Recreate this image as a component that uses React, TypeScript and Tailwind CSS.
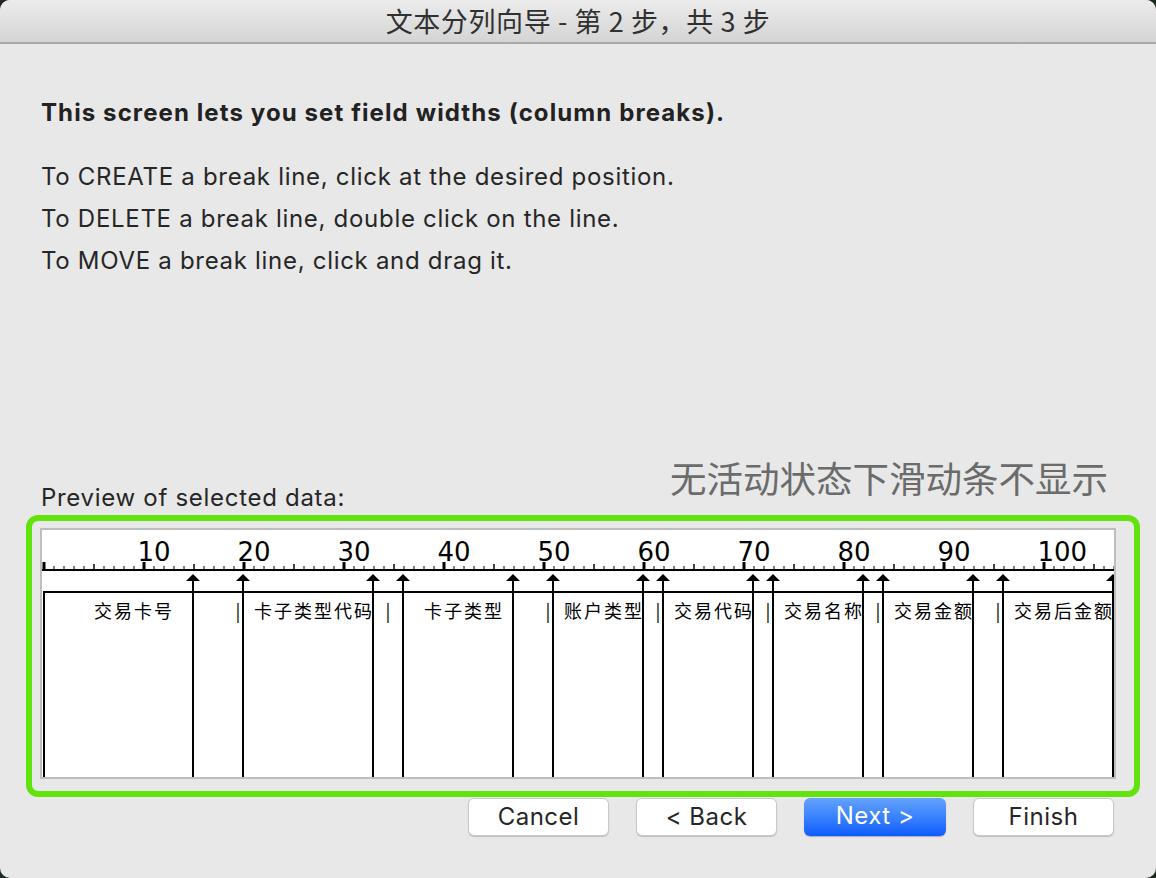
const UNITS = 108;
const BREAKS = [15, 20, 33, 36, 47, 51, 60, 62, 71, 73, 82, 84, 93, 96, 107];
const ROW =
  "     交易卡号      | 卡子类型代码 |   卡子类型    | 账户类型 | 交易代码 | 交易名称 | 交易金额  | 交易后金额";

const ui = { fontFamily: "Inter, 'Noto Sans CJK SC', sans-serif" };
const cjk = { fontFamily: "'Noto Sans CJK SC', 'Noto Sans', sans-serif" };

function Ruler() {
  const ticks = Array.from({ length: UNITS }, (_, n) => n);
  return (
    <svg width="1072" height="61" className="block shrink-0">
      <rect x="0" y="39" width="1072" height="2" fill="#000" />
      {ticks.map((n) => {
        const x = 2 + n * 10;
        if (n % 10 === 0) return <rect key={n} x={x - 1.5} y="32" width="3" height="9" fill="#000" />;
        if (n % 5 === 0) return <rect key={n} x={x - 0.75} y="34" width="1.5" height="5" fill="#000" />;
        return <rect key={n} x={x - 0.5} y="36" width="1" height="3" fill="#000" />;
      })}
      {ticks
        .filter((n) => n > 0 && n % 10 === 0)
        .map((n) => (
          <text
            key={n}
            x={2 + n * 10 - 6.5}
            y="31"
            fontSize="26"
            fill="#000"
            style={{ fontFamily: "'DejaVu Sans', sans-serif" }}
          >
            {n}
          </text>
        ))}
    </svg>
  );
}

function Preview() {
  return (
    <div className="relative h-[251px] w-[1076px] overflow-hidden border-2 border-[#bdbdbd] bg-white">
      <div className="flex h-full flex-col">
        <Ruler />
        <div className="ml-[1px] flex-1 border-l-2 border-t-2 border-black pt-[6px]">
          <div className="-ml-[2px] flex h-[22px] whitespace-nowrap text-[18px] leading-[22px] text-black" style={cjk}>
            {Array.from(ROW).map((ch, i) => {
              const wide = /[\u4e00-\u9fff]/.test(ch);
              return (
                <span key={i} className={wide ? "w-[20px] shrink-0 text-center" : "w-[10px] shrink-0 text-center"}>
                  {ch === " " ? "\u00a0" : ch}
                </span>
              );
            })}
          </div>
        </div>
      </div>
      {BREAKS.map((b) => (
        <div
          key={b}
          className="absolute bottom-0 top-[44px] flex w-[14px] flex-col items-center"
          style={{ left: b * 10 - 6 }}
        >
          <svg width="14" height="7" className="block shrink-0">
            <polygon points="0,7 7,0 14,7" fill="#000" />
          </svg>
          <div className="w-[2px] flex-1 bg-black" />
        </div>
      ))}
    </div>
  );
}

function Button({ label, primary }: { label: string; primary?: boolean }) {
  return (
    <button
      className={
        primary
          ? "h-[38px] w-[142px] rounded-[6px] bg-linear-to-b from-[#64a2fb] to-[#0b5bff] pb-[2px] text-[24px] tracking-[0.5px] text-white shadow-[0_1px_1px_rgba(0,0,0,0.25)]"
          : "h-[38px] w-[141px] rounded-[6px] border border-[#c9c9c9] bg-white pb-[2px] text-[24px] tracking-[0.5px] text-[#262626] shadow-[0_1px_1px_rgba(0,0,0,0.18)]"
      }
      style={ui}
    >
      {label}
    </button>
  );
}

export default function App() {
  return (
    <div className="h-[878px] w-[1156px] bg-[#1f2a22]">
      <div className="flex h-full flex-col overflow-hidden rounded-[10px] bg-[#e8e8e8]" style={ui}>
        <div className="flex h-[44px] shrink-0 items-center justify-center border-b-2 border-[#a9a9a9] bg-linear-to-b from-[#ececec] to-[#d4d4d4]">
          <span className="text-[27px] tracking-[0.6px] text-[#303030]" style={cjk}>
            文本分列向导 - 第 2 步，共 3 步
          </span>
        </div>

        <div className="flex flex-col px-[26px]">
          <p className="ml-[15px] mt-[48px] text-[24px] font-bold leading-[42px] tracking-[1.1px] text-[#222]">
            This screen lets you set field widths (column breaks).
          </p>
          <div className="ml-[15px] mt-[22px] text-[24px] leading-[42px] tracking-[0.7px] text-[#262626]">
            <p>To CREATE a break line, click at the desired position.</p>
            <p>To DELETE a break line, double click on the line.</p>
            <p>To MOVE a break line, click and drag it.</p>
          </div>

          <div className="mt-[176px] flex items-end justify-between">
            <span className="ml-[15px] text-[24px] leading-[30px] tracking-[0.7px] text-[#262626]">
              Preview of selected data:
            </span>
            <span className="mb-[15px] mr-[22px] text-[36.5px] leading-[40px] text-[#6b6b6b]" style={cjk}>
              无活动状态下滑动条不显示
            </span>
          </div>

          <div className="mt-[2px] w-[1114px] rounded-[12px] border-[6px] border-[#62e30e] pb-[12px] pl-[8px] pr-[18px] pt-[7px]">
            <Preview />
          </div>

          <div className="mr-[16px] mt-[1px] flex justify-end gap-[27px]">
            <Button label="Cancel" />
            <Button label="< Back" />
            <Button label="Next >" primary />
            <Button label="Finish" />
          </div>
        </div>
      </div>
    </div>
  );
}
